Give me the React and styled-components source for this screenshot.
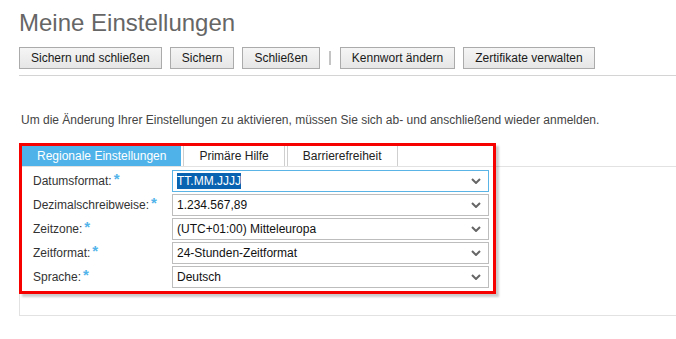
import React from 'react'
import styled, {createGlobalStyle} from 'styled-components'

const GlobalStyle = createGlobalStyle`
    html, body {
        margin: 0;
        padding: 0;
        overflow: hidden;
        background: #fff;
        font-family: 'Liberation Sans', Arial, sans-serif;
    }
`

const Page = styled.div`
    padding-left: 19px;
`

const Title = styled.h1`
    margin: 9px 0 0;
    font-size: 24px;
    line-height: 28px;
    font-weight: normal;
    color: #666;
`

const Toolbar = styled.div`
    display: flex;
    align-items: center;
    gap: 8px;
    margin-top: 10px;
    padding-bottom: 6px;
    border-bottom: 1px solid #d4d4d4;
`

const Button = styled.button`
    height: 22px;
    padding: 0 11px;
    border: 1px solid #ababab;
    background: linear-gradient(#f5f5f5, #e6e6e6);
    font-family: inherit;
    font-size: 12px;
    color: #1a1a1a;
    cursor: pointer;
`

const Divider = styled.span`
    width: 2px;
    height: 14px;
    margin: 0 1px;
    background: #c4c4c4;
`

const Info = styled.p`
    margin: 37px 0 0 2px;
    font-size: 12px;
    line-height: 14px;
    color: #444;
`

const Panel = styled.div`
    position: relative;
    margin-top: 19px;
    border-left: 1px solid #e2e2e2;
    border-bottom: 1px solid #e2e2e2;
    padding-bottom: 27px;
`

const Tabs = styled.div`
    display: flex;
    gap: 2px;
    padding-left: 2px;
    border-bottom: 1px solid #e2e2e2;
`

const Tab = styled.div`
    height: 20px;
    line-height: 20px;
    padding: 0 ${p => (p.$active ? 14 : 15)}px;
    font-size: 12px;
    color: ${p => (p.$active ? '#fff' : '#222')};
    background: ${p => (p.$active ? '#4fb3e9' : '#fff')};
    border-left: 1px solid ${p => (p.$active ? '#4fb3e9' : '#cfcfcf')};
    border-right: 1px solid ${p => (p.$active ? '#4fb3e9' : '#cfcfcf')};
`

const Form = styled.div`
    display: flex;
    flex-direction: column;
    gap: 2px;
    padding: 3px 0 0 13px;
`

const Row = styled.div`
    display: grid;
    grid-template-columns: 139px 317px;
    align-items: center;
    height: 22px;
`

const Label = styled.span`
    font-size: 12px;
    line-height: 14px;
    color: #333;
`

const Required = styled.span`
    margin-left: 2px;
    font-size: 15px;
    line-height: 12px;
    font-weight: bold;
    color: #52b4ea;
    position: relative;
    top: -1px;
`

const Select = styled.div`
    display: flex;
    align-items: center;
    justify-content: space-between;
    box-sizing: border-box;
    height: 22px;
    padding: 0 7px 0 4px;
    border: 1px solid ${p => (p.$focused ? '#5ab5e6' : '#bdbdbd')};
    background: #fff;
    font-size: 12px;
    color: #111;
`

const Value = styled.span`
    padding: 1px 0;
    ${p => p.$selected && `
        background: #0a63b0;
        color: #fff;
    `}
`

const Highlight = styled.div`
    position: absolute;
    top: -3px;
    left: -1px;
    width: 477px;
    height: 151px;
    box-sizing: border-box;
    border: 3px solid #f70000;
    box-shadow: 3px 3px 2px rgba(0, 0, 0, 0.2);
    pointer-events: none;
`

const Chevron = () => (
    <svg width="10" height="6" viewBox="0 0 10 6">
        <polyline points="1,1 5,5 9,1" fill="none" stroke="#666" strokeWidth="2" />
    </svg>
)

const fields = [
    {label: 'Datumsformat:', value: 'TT.MM.JJJJ', focused: true},
    {label: 'Dezimalschreibweise:', value: '1.234.567,89'},
    {label: 'Zeitzone:', value: '(UTC+01:00) Mitteleuropa'},
    {label: 'Zeitformat:', value: '24-Stunden-Zeitformat'},
    {label: 'Sprache:', value: 'Deutsch'},
]

export default function App() {
    return (
        <Page>
            <GlobalStyle />
            <Title>Meine Einstellungen</Title>
            <Toolbar>
                <Button>Sichern und schließen</Button>
                <Button>Sichern</Button>
                <Button>Schließen</Button>
                <Divider />
                <Button>Kennwort ändern</Button>
                <Button>Zertifikate verwalten</Button>
            </Toolbar>
            <Info>
                Um die Änderung Ihrer Einstellungen zu aktivieren, müssen Sie sich ab- und anschließend wieder anmelden.
            </Info>
            <Panel>
                <Tabs>
                    <Tab $active>Regionale Einstellungen</Tab>
                    <Tab>Primäre Hilfe</Tab>
                    <Tab>Barrierefreiheit</Tab>
                </Tabs>
                <Form>
                    {fields.map(f => (
                        <Row key={f.label}>
                            <Label>
                                {f.label}
                                <Required>*</Required>
                            </Label>
                            <Select $focused={f.focused}>
                                <Value $selected={f.focused}>{f.value}</Value>
                                <Chevron />
                            </Select>
                        </Row>
                    ))}
                </Form>
                <Highlight />
            </Panel>
        </Page>
    )
}
